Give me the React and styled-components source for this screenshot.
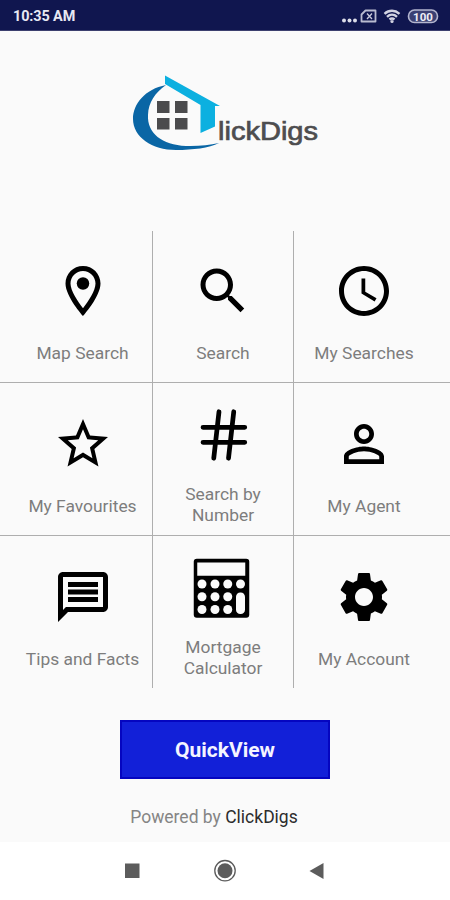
import React from "react";
import styled, { createGlobalStyle } from "styled-components";

const GlobalStyle = createGlobalStyle`
  * {
    box-sizing: border-box;
  }

  body {
    margin: 0;
    background: #fafafa;
    font-family: Roboto, "Liberation Sans", sans-serif;
  }
`;

const Screen = styled.div`
  display: flex;
  flex-direction: column;
  width: 450px;
  height: 900px;
  overflow: hidden;
  background: #fafafa;
`;

const StatusBar = styled.header`
  display: flex;
  align-items: center;
  justify-content: space-between;
  height: 31px;
  padding: 2px 11px 0 13px;
  background: #10164f;
  border-bottom: 1px solid #3c406f;
  color: #e8e9f3;
`;

const Time = styled.span`
  font-size: 14.4px;
  font-weight: 700;
  letter-spacing: -0.1px;
`;

const LogoArea = styled.div`
  height: 200px;
  padding: 34px 0 0 120px;

  svg {
    display: block;
  }
`;

const LogoText = styled.text`
  font-family: "Liberation Sans", sans-serif;
  font-size: 26.5px;
  fill: #4d4d4f;
  stroke: #4d4d4f;
  stroke-width: 0.7px;
`;

const Menu = styled.main`
  height: 457px;
`;

const MenuRow = styled.div`
  display: grid;
  grid-template-columns: 153px 141px 141px;
  height: ${({ $height }) => $height}px;
  padding-top: ${({ $offset }) => $offset}px;
  border-bottom: ${({ $last }) => ($last ? "none" : "1px solid #aeaeae")};

  &:first-child {
    padding-top: 0;
  }
`;

const MenuItem = styled.a`
  display: flex;
  flex-direction: column;
  align-items: center;
  justify-content: center;
  padding-top: ${({ $top }) => $top}px;
  padding-left: ${({ $first }) => ($first ? 13 : 0)}px;
  padding-right: ${({ $last }) => ($last ? 1 : 0)}px;
  border-right: ${({ $last }) => ($last ? "none" : "1px solid #aeaeae")};
`;

const MenuIcon = styled.svg`
  display: block;
  flex: none;
  width: 60px;
  height: 60px;
  fill: #000;
`;

const MenuLabel = styled.span`
  margin-top: ${({ $twoLines }) => ($twoLines ? 19 : 22)}px;
  color: #7d7d7d;
  font-size: 17.4px;
  line-height: 20.5px;
  text-align: center;
  white-space: pre-line;
`;

const Footer = styled.footer`
  display: flex;
  flex-direction: column;
  align-items: center;
  height: 154px;
  padding-top: 32px;
`;

const QuickButton = styled.button`
  width: 210px;
  height: 59px;
  padding: 1px 0 0;
  border: 2px solid #0505c0;
  background: #1220d8;
  color: #f4f4ff;
  font-family: inherit;
  font-size: 21px;
  font-weight: 700;
`;

const Powered = styled.p`
  margin: 28px 0 0;
  padding-right: 22px;
  color: #858585;
  font-size: 17.5px;
  line-height: 20px;

  b {
    color: #2c2c2c;
    font-weight: 400;
  }
`;

const NavBar = styled.nav`
  height: 58px;
  background: #fff;

  svg {
    display: block;
  }
`;

const Logo = () => (
  <svg width="210" height="95" viewBox="0 0 210 95">
    <path
      d="M46 20C25 24 13 39 13 54c0 18 19 31 43 31 17 0 33-2 43-7-10 2-21 3.500-33 3C42 80 27 68 28 50c.5-13 7-22 18-30z"
      fill="#0a66a5"
    />
    <path d="M45 10.500 100 41h-5v20.500L80.500 68V40L45 19z" fill="#0cb0e0" />
    <g fill="#4b4b4d">
      <rect x="37" y="36" width="12.500" height="12" />
      <rect x="55" y="36" width="12.500" height="12" />
      <rect x="37" y="53" width="12.500" height="11.500" />
      <rect x="55" y="53" width="12.500" height="11.500" />
    </g>
    <LogoText x="98" y="74.500" textLength="100" lengthAdjust="spacingAndGlyphs">
      lickDigs
    </LogoText>
  </svg>
);

const StatusIcons = () => (
  <svg width="100" height="18" viewBox="339 7 100 18">
    <g fill="#dcdde9">
      <circle cx="344" cy="20.500" r="2" />
      <circle cx="349.500" cy="20.500" r="2" />
      <circle cx="355" cy="20.500" r="2" />
    </g>
    <path d="M365.500 10.500h10v11h-14v-7z" fill="none" stroke="#b9bbd0" strokeWidth="1.800" strokeLinejoin="round" />
    <path d="M367 13.500l5 5.500M372 13.500l-5 5.500" stroke="#c9cadb" strokeWidth="1.300" />
    <g fill="none" stroke="#d2d3e2" strokeWidth="2.400">
      <path d="M384.500 13.800c4.500-4 10.500-4 15 0" />
      <path d="M387 16.800c3-2.700 7-2.700 10 0" />
      <path d="M389.500 19.500c1.500-1.300 3.500-1.300 5 0" />
    </g>
    <circle cx="392" cy="21.500" r="1.600" fill="#d2d3e2" />
    <rect x="408.500" y="10" width="29" height="12.500" rx="6" fill="#3b4073" stroke="#b4b6cf" strokeWidth="1.600" />
    <text x="423" y="20.500" textAnchor="middle" fontSize="11.500" fontWeight="700" fill="#eeeef6">
      100
    </text>
  </svg>
);

const CalculatorShape = () => (
  <>
    <rect x="0.300" y="0.300" width="22.200" height="23.600" rx="1.200" />
    <g fill="#fafafa">
      <rect x="1.700" y="1.800" width="19.200" height="5.300" />
      {[10.4, 15.5, 20.6].map((cy) =>
        [3.6, 8.8, 13.9].map((cx) => <circle key={`${cx}-${cy}`} cx={cx} cy={cy} r="1.800" />)
      )}
      <circle cx="19" cy="10.400" r="1.800" />
      <rect x="17.200" y="13.800" width="3.600" height="8.600" rx="1.700" />
    </g>
  </>
);

const rows = [
  {
    height: 152,
    top: 11,
    items: [
      {
        label: "Map Search",
        icon: (
          <>
            <path d="M12 2C8.130 2 5 5.130 5 9c0 5.250 7 13 7 13s7-7.750 7-13c0-3.870-3.130-7-7-7zM7 9c0-2.760 2.240-5 5-5s5 2.240 5 5c0 2.880-2.880 7.190-5 9.880C9.920 16.210 7 11.850 7 9z" />
            <circle cx="12" cy="9" r="2.500" />
          </>
        ),
      },
      {
        label: "Search",
        icon: (
          <path d="M15.500 14h-.79l-.28-.27C15.410 12.590 16 11.110 16 9.500 16 5.910 13.090 3 9.500 3S3 5.910 3 9.500 5.910 16 9.500 16c1.610 0 3.090-.59 4.230-1.570l.27.28v.79l5 4.990L20.490 19l-4.990-5zm-6 0C7.010 14 5 11.990 5 9.500S7.010 5 9.500 5 14 7.010 14 9.500 11.990 14 9.500 14z" />
        ),
      },
      {
        label: "My Searches",
        icon: (
          <>
            <path d="M11.990 2C6.470 2 2 6.480 2 12s4.470 10 9.990 10C17.520 22 22 17.520 22 12S17.520 2 11.990 2zM12 20c-4.420 0-8-3.580-8-8s3.580-8 8-8 8 3.580 8 8-3.580 8-8 8z" />
            <path d="M12.500 7H11v6l5.250 3.150.75-1.230-4.500-2.670z" />
          </>
        ),
      },
    ],
  },
  {
    height: 153,
    top: 12,
    items: [
      {
        label: "My Favourites",
        icon: (
          <path d="M22 9.240l-7.190-.62L12 2 9.190 8.630 2 9.240l5.460 4.730L5.820 21 12 17.270 18.180 21l-1.630-7.030L22 9.240zM12 15.400l-3.760 2.270 1-4.280-3.320-2.880 4.380-.38L12 6.100l1.710 4.040 4.380.38-3.320 2.880 1 4.280L12 15.400z" />
        ),
      },
      {
        label: "Search by\nNumber",
        twoLines: true,
        icon: (
          <path
            d="M10.400 2.700L8.300 21.300M16.300 2.700l-2.100 18.600M4 8.900h16.700M4 14.900h16.700"
            fill="none"
            stroke="#000"
            strokeWidth="1.900"
            strokeLinecap="round"
          />
        ),
      },
      {
        label: "My Agent",
        icon: (
          <path d="M12 5.900c1.160 0 2.100.94 2.100 2.100s-.94 2.100-2.100 2.100S9.900 9.160 9.900 8s.94-2.100 2.100-2.100m0 9c2.970 0 6.100 1.460 6.100 2.100v1.100H5.900V17c0-.64 3.130-2.100 6.100-2.100M12 4C9.790 4 8 5.790 8 8s1.790 4 4 4 4-1.790 4-4-1.790-4-4-4zm0 9c-2.670 0-8 1.340-8 4v3h16v-3c0-2.660-5.330-4-8-4z" />
        ),
      },
    ],
  },
  {
    height: 152,
    top: 12,
    items: [
      {
        label: "Tips and Facts",
        icon: (
          <path d="M4 4h16v12H5.170L4 17.170V4m0-2c-1.100 0-1.990.9-1.990 2L2 22l4-4h14c1.100 0 2-.9 2-2V4c0-1.100-.9-2-2-2H4zm2 10h12v2H6v-2zm0-3h12v2H6V9zm0-3h12v2H6V6z" />
        ),
      },
      { label: "Mortgage\nCalculator", twoLines: true, icon: <CalculatorShape /> },
      {
        label: "My Account",
        icon: (
          <path d="M19.140 12.940c.04-.3.06-.61.06-.94 0-.32-.02-.64-.07-.94l2.030-1.580c.18-.14.23-.41.12-.61l-1.920-3.320c-.12-.22-.37-.29-.59-.22l-2.390.96c-.5-.38-1.030-.7-1.620-.94l-.36-2.540c-.04-.24-.24-.41-.48-.41h-3.840c-.24 0-.43.17-.47.41l-.36 2.540c-.59.24-1.130.57-1.620.94l-2.390-.96c-.22-.08-.47 0-.59.22L2.740 8.870c-.12.21-.08.47.12.61l2.030 1.580c-.05.3-.09.63-.09.94s.02.64.07.94l-2.030 1.580c-.18.14-.23.41-.12.61l1.920 3.320c.12.22.37.29.59.22l2.390-.96c.5.38 1.030.7 1.620.94l.36 2.540c.05.24.24.41.48.41h3.840c.24 0 .44-.17.47-.41l.36-2.540c.59-.24 1.130-.56 1.620-.94l2.390.96c.22.08.47 0 .59-.22l1.920-3.320c.12-.22.07-.47-.12-.61l-2.010-1.580zM12 15.600c-1.980 0-3.600-1.620-3.600-3.600s1.620-3.600 3.600-3.600 3.600 1.620 3.600 3.600-1.620 3.600-3.600 3.600z" />
        ),
      },
    ],
  },
];

export default function App() {
  return (
    <>
      <GlobalStyle />
      <Screen>
        <StatusBar>
          <Time>10:35 AM</Time>
          <StatusIcons />
        </StatusBar>

        <LogoArea>
          <Logo />
        </LogoArea>

        <Menu>
          {rows.map((row, r) => (
            <MenuRow key={r} $height={row.height} $last={r === rows.length - 1}>
              {row.items.map((item, i) => (
                <MenuItem key={item.label} $top={row.top} $first={i === 0} $last={i === 2}>
                  <MenuIcon viewBox="0 0 24 24">{item.icon}</MenuIcon>
                  <MenuLabel $twoLines={item.twoLines}>{item.label}</MenuLabel>
                </MenuItem>
              ))}
            </MenuRow>
          ))}
        </Menu>

        <Footer>
          <QuickButton>QuickView</QuickButton>
          <Powered>
            Powered by <b>ClickDigs</b>
          </Powered>
        </Footer>

        <NavBar>
          <svg width="450" height="58" viewBox="0 842 450 58">
            <rect x="125" y="863.500" width="14.500" height="14.500" fill="#5c5c5c" />
            <circle cx="225" cy="870.700" r="10.200" fill="none" stroke="#5c5c5c" strokeWidth="1.300" />
            <circle cx="225" cy="870.700" r="7.500" fill="#5c5c5c" />
            <path d="M323.500 863v16L309.500 871z" fill="#5c5c5c" />
          </svg>
        </NavBar>
      </Screen>
    </>
  );
}
